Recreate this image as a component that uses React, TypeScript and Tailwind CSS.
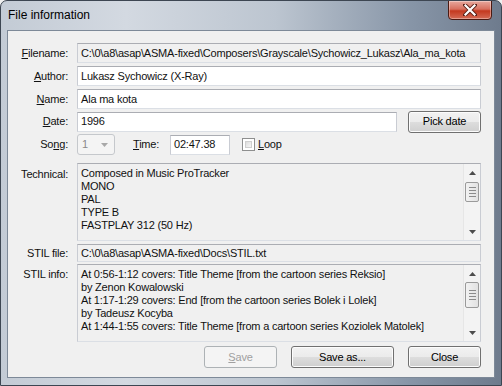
import React from "react";

const font = { fontFamily: '"Liberation Sans", Arial, sans-serif' };

function ScrollBar({ thumbTop, thumbH }: { thumbTop: number; thumbH: number }) {
  return (
    <div className="absolute right-0 top-0 bottom-0 w-[17px] bg-[#f3f3f3] border-l border-[#e6e6e6] flex flex-col items-center">
      <div className="h-[17px] w-full flex items-center justify-center">
        <svg width="7" height="4" viewBox="0 0 7 4">
          <path d="M0 4 L3.5 0 L7 4 Z" fill="#4d4d4d" />
        </svg>
      </div>
      <div className="relative flex-1 w-full">
        <div
          className="absolute left-[1px] right-[1px] rounded-[2px] border border-[#9a9a9a] bg-[linear-gradient(to_right,#f2f2f2,#e2e2e2)] flex flex-col items-center justify-center gap-[2px]"
          style={{ top: thumbTop, height: thumbH }}
        >
          <div className="w-[7px] h-[1px] bg-[#8b8b8b]" />
          <div className="w-[7px] h-[1px] bg-[#8b8b8b]" />
          <div className="w-[7px] h-[1px] bg-[#8b8b8b]" />
          <div className="w-[7px] h-[1px] bg-[#8b8b8b]" />
        </div>
      </div>
      <div className="h-[17px] w-full flex items-center justify-center">
        <svg width="7" height="4" viewBox="0 0 7 4">
          <path d="M0 0 L3.5 4 L7 0 Z" fill="#4d4d4d" />
        </svg>
      </div>
    </div>
  );
}

function Btn({ children, disabled, w }: { children: React.ReactNode; disabled?: boolean; w: string }) {
  return (
    <div
      className={
        "h-[22px] rounded-[3px] border flex items-center justify-center text-[11px] " +
        w +
        (disabled
          ? " border-[#adb2b5] bg-[#f4f4f4] text-[#a0a0a0]"
          : " border-[#707070] bg-[linear-gradient(to_bottom,#f2f2f2_0%,#ebebeb_50%,#dddddd_51%,#cfcfcf_100%)] text-black shadow-[inset_0_0_0_1px_#fcfcfc]")
      }
    >
      {children}
    </div>
  );
}

const box =
  "border border-t-[#abadb3] border-l-[#c9ccd3] border-r-[#c9ccd3] border-b-[#dbdfe5]";

export default function App() {
  return (
    <div style={font} className="w-[502px] h-[386px] bg-[#f0f0f0]">
      <div className="relative w-[502px] h-[386px] rounded-t-[7px] border border-[#3d4652] bg-[linear-gradient(to_right,#c3cbd5_0%,#d3d9e1_25%,#bcc5d0_55%,#8795a7_82%,#6e7b8d_100%)] overflow-hidden">
        {/* title bar */}
        <div className="h-[29px] flex items-center pl-[7px] text-[12px] text-black">
          <span className="-mt-[1px]">File information</span>
        </div>
        <div className="absolute right-[9px] top-[-1px] w-[44px] h-[20px] rounded-b-[4px] border border-[#4b1a12] bg-[linear-gradient(to_bottom,#e7a89d_0%,#d7705f_45%,#c4391f_55%,#d46b55_100%)] flex items-center justify-center shadow-[inset_0_0_0_1px_rgba(255,255,255,0.35)]">
          <svg width="14" height="12" viewBox="0 0 14 12">
            <path d="M2 1 L12 11 M12 1 L2 11" stroke="#5a2118" strokeWidth="4" strokeLinecap="square" />
            <path d="M2.5 1.5 L11.5 10.5 M11.5 1.5 L2.5 10.5" stroke="#ffffff" strokeWidth="2.2" strokeLinecap="square" />
          </svg>
        </div>

        {/* client area */}
        <div className="mx-[6px] h-[348px] bg-[#f0f0f0] border border-[#7d8998] text-[11px] tracking-[-0.2px] text-[#111111]">
          <div className="pt-[12px] flex flex-col">
            {/* Filename */}
            <div className="flex items-center h-[20px]">
              <div className="w-[60px] text-right"><span className="underline">F</span>ilename:</div>
              <div className={"ml-[9px] w-[404px] h-[20px] bg-[#f0f0f0] pl-[3px] flex items-center whitespace-nowrap overflow-hidden " + box}>
                C:\0\a8\asap\ASMA-fixed\Composers\Grayscale\Sychowicz_Lukasz\Ala_ma_kota
              </div>
            </div>
            {/* Author */}
            <div className="flex items-center h-[20px] mt-[3px]">
              <div className="w-[60px] text-right"><span className="underline">A</span>uthor:</div>
              <div className={"ml-[9px] w-[404px] h-[20px] bg-white pl-[3px] flex items-center " + box}>
                Lukasz Sychowicz (X-Ray)
              </div>
            </div>
            {/* Name */}
            <div className="flex items-center h-[20px] mt-[3px]">
              <div className="w-[60px] text-right"><span className="underline">N</span>ame:</div>
              <div className={"ml-[9px] w-[404px] h-[20px] bg-white pl-[3px] flex items-center " + box}>
                Ala ma kota
              </div>
            </div>
            {/* Date */}
            <div className="flex items-center h-[21px] mt-[2px]">
              <div className="w-[60px] text-right"><span className="underline">D</span>ate:</div>
              <div className={"ml-[9px] w-[320px] h-[20px] bg-white pl-[3px] flex items-center " + box}>
                1996
              </div>
              <div className="ml-[11px]">
                <Btn w="w-[73px]">Pick date</Btn>
              </div>
            </div>
            {/* Song / Time / Loop */}
            <div className="flex items-center h-[21px] mt-[2px]">
              <div className="w-[60px] text-right">So<span className="underline">n</span>g:</div>
              <div className="ml-[9px] w-[38px] h-[21px] rounded-[3px] border border-[#c5c8cc] bg-[#f4f4f4] flex items-center justify-between pl-[4px] pr-[6px] text-[#8a8a8a]">
                <span>1</span>
                <svg width="7" height="4" viewBox="0 0 7 4">
                  <path d="M0 0 L3.5 4 L7 0 Z" fill="#a8a8a8" />
                </svg>
              </div>
              <div className="ml-[18px] w-[26px]"><span className="underline">T</span>ime:</div>
              <div className={"ml-[11px] w-[60px] h-[20px] bg-white pl-[3px] flex items-center " + box}>
                02:47.38
              </div>
              <div className="ml-[12px] w-[13px] h-[13px] border border-[#8e8f8f] bg-white p-[2px]">
                <div className="w-full h-full bg-[linear-gradient(135deg,#dcdcdc,#f6f6f6)] border border-[#cfcfcf]" />
              </div>
              <div className="ml-[3px]"><span className="underline">L</span>oop</div>
            </div>
            {/* Technical */}
            <div className="flex h-[78px] mt-[8px]">
              <div className="w-[60px] text-right pt-[3px]">Technical:</div>
              <div className={"relative ml-[9px] w-[404px] h-[78px] bg-[#f0f0f0] pl-[3px] pt-[3px] leading-[13px] " + box}>
                <div>Composed in Music ProTracker</div>
                <div>MONO</div>
                <div>PAL</div>
                <div>TYPE B</div>
                <div>FASTPLAY 312 (50 Hz)</div>
                <ScrollBar thumbTop={1} thumbH={20} />
              </div>
            </div>
            {/* STIL file */}
            <div className="flex items-center h-[18px] mt-[3px]">
              <div className="w-[60px] text-right">STIL file:</div>
              <div className={"ml-[9px] w-[404px] h-[18px] bg-[#f0f0f0] pl-[3px] flex items-center " + box}>
                C:\0\a8\asap\ASMA-fixed\Docs\STIL.txt
              </div>
            </div>
            {/* STIL info */}
            <div className="flex h-[78px] mt-[2px]">
              <div className="w-[60px] text-right pt-[2px]">STIL info:</div>
              <div className={"relative ml-[9px] w-[404px] h-[78px] bg-[#f0f0f0] pl-[3px] pt-[3px] leading-[13px] whitespace-nowrap overflow-hidden " + box}>
                <div>At 0:56-1:12 covers: Title Theme [from the cartoon series Reksio]</div>
                <div>by Zenon Kowalowski</div>
                <div>At 1:17-1:29 covers: End [from the cartoon series Bolek i Lolek]</div>
                <div>by Tadeusz Kocyba</div>
                <div>At 1:44-1:55 covers: Title Theme [from a cartoon series Koziolek Matolek]</div>
                <ScrollBar thumbTop={0} thumbH={26} />
              </div>
            </div>
            {/* Buttons */}
            <div className="flex justify-end gap-[14px] mt-[4px] pr-[13px]">
              <Btn w="w-[73px]" disabled>
                <span className="underline">S</span>ave
              </Btn>
              <Btn w="w-[103px]">Save as...</Btn>
              <Btn w="w-[73px]">Close</Btn>
            </div>
          </div>
        </div>
      </div>
    </div>
  );
}
